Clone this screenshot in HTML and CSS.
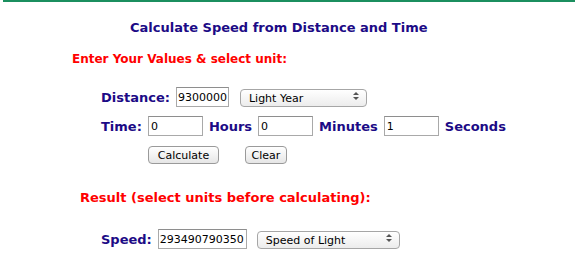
FILE: index.html
```html
<!DOCTYPE html>
<html lang="en">
<head>
<meta charset="UTF-8">
<meta name="viewport" content="width=device-width, initial-scale=1.0">
<title>Speed Calculator</title>
<link rel="stylesheet" href="styles.css">
</head>
<body>
    <div class="page">
        <h1 class="title">Calculate Speed from Distance and Time</h1>
        <h2 class="section">Enter Your Values &amp; select unit:</h2>

        <form class="calc" onsubmit="return false">
            <div class="row">
                <label class="lbl" for="dist">Distance:</label>
                <input class="num dist" id="dist" type="text" value="9300000">
                <span class="pick dist-unit">
                    <select>
                        <option>Light Year</option>
                        <option>Kilometers</option>
                        <option>Miles</option>
                    </select>
                </span>
            </div>
            <div class="row">
                <label class="lbl" for="hrs">Time:</label>
                <input class="num time" id="hrs" type="text" value="0">
                <span class="lbl unit">Hours</span>
                <input class="num time" type="text" value="0">
                <span class="lbl unit">Minutes</span>
                <input class="num time" type="text" value="1">
                <span class="lbl unit">Seconds</span>
            </div>
            <div class="row buttons">
                <button class="btn calc-btn" type="button">Calculate</button>
                <button class="btn clear-btn" type="reset">Clear</button>
            </div>
        </form>

        <h2 class="section result">Result (select units before calculating):</h2>

        <div class="row speed">
            <label class="lbl" for="spd">Speed:</label>
            <input class="num spd" id="spd" type="text" value="293490790350">
            <span class="pick speed-unit">
                <select>
                    <option>Speed of Light</option>
                    <option>km/h</option>
                    <option>mph</option>
                </select>
            </span>
        </div>
    </div>
</body>
</html>
```

FILE: styles.css
```css
body {
    margin: 0;
    background: #fff;
    font-family: "DejaVu Sans", Verdana, sans-serif;
}

.page {
    margin: 0 3px;
    border-top: 2px solid #1b8f5f;
    padding-top: 1px;
    height: 261px;
}

.title {
    margin: 16px 0 0 127px;
    font-size: 13px;
    color: #1c0b86;
    line-height: 18px;
}

.section {
    margin: 13px 0 0 69px;
    font-size: 12px;
    color: #ff0000;
    line-height: 18px;
}

.section.result {
    margin: 24px 0 0 77px;
    font-size: 13px;
}

.calc {
    margin: 19px 0 0 98px;
}

.row {
    display: flex;
    align-items: center;
    height: 20px;
    margin-bottom: 9px;
}

.lbl {
    font-size: 13px;
    font-weight: bold;
    color: #1c0b86;
    margin-right: 6px;
}

.unit {
    margin-left: 6px;
}

.num {
    box-sizing: border-box;
    height: 20px;
    border: 1px solid #a9a9a9;
    border-top-color: #8e8e8e;
    padding: 0 2px;
    font-family: "DejaVu Sans", sans-serif;
    font-size: 11px;
    color: #000;
}

.dist {
    width: 53px;
    padding: 0 1px;
}
.time { width: 55px; }
.spd  {
    width: 89px;
    padding: 0 1px;
}

.pick {
    position: relative;
    display: inline-block;
    margin-left: 11px;
}

.pick select {
    appearance: none;
    -webkit-appearance: none;
    box-sizing: border-box;
    height: 18px;
    border: 1px solid #a6a6a6;
    border-radius: 4px;
    background: linear-gradient(#ffffff, #ececec);
    padding: 0 18px 0 8px;
    font-family: "DejaVu Sans", sans-serif;
    font-size: 11px;
    color: #000;
}

.dist-unit select { width: 127px; }
.speed-unit { margin-left: 10px; }
.speed-unit select { width: 143px; }

/* up/down arrows of the mac select */
.pick::before,
.pick::after {
    content: "";
    position: absolute;
    right: 8px;
    border-left: 3px solid transparent;
    border-right: 3px solid transparent;
}

.pick::before {
    top: 5px;
    border-bottom: 3px solid #555;
}

.pick::after {
    top: 10px;
    border-top: 3px solid #555;
}

.buttons {
    margin-left: 47px;
}

.btn {
    box-sizing: border-box;
    height: 18px;
    border: 1px solid #9a9a9a;
    border-radius: 4px;
    background: linear-gradient(#ffffff, #e6e6e6);
    padding: 0;
    font-family: "DejaVu Sans", sans-serif;
    font-size: 11px;
    color: #000;
}

.calc-btn {
    width: 71px;
    margin-right: 26px;
}

.clear-btn {
    width: 42px;
}

.speed {
    margin: 22px 0 0 98px;
}
```
